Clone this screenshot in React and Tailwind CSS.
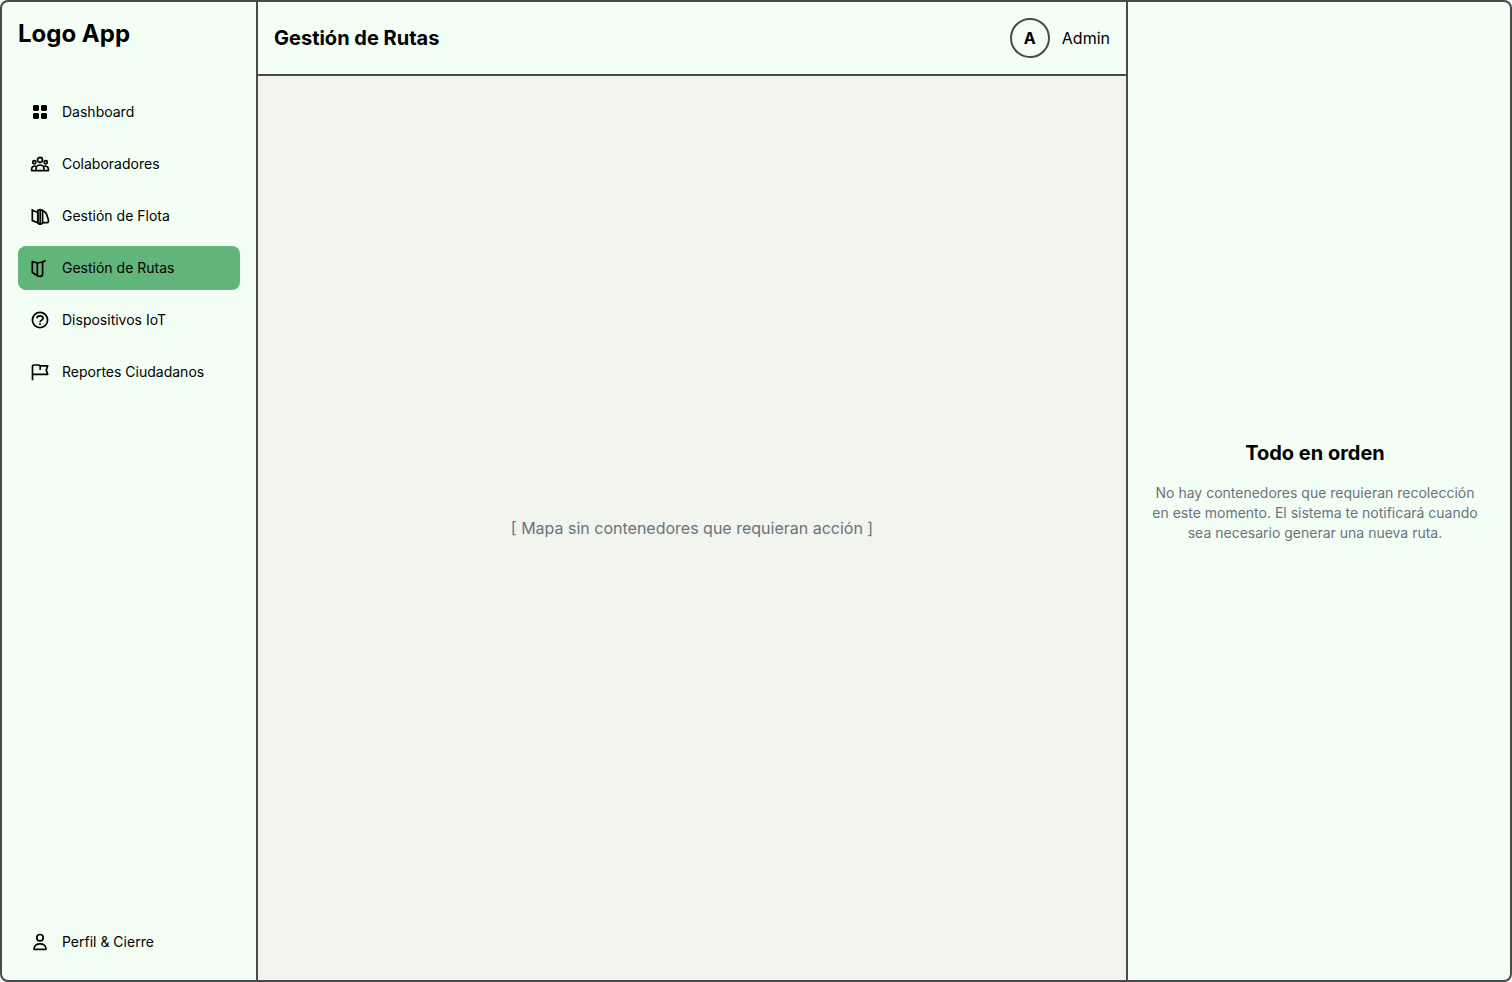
function Icon({ children }) {
  return (
    <svg
      viewBox="0 0 20 20"
      className="size-5 shrink-0"
      fill="none"
      stroke="currentColor"
      strokeWidth="1.7"
      strokeLinejoin="round"
      aria-hidden="true"
    >
      {children}
    </svg>
  );
}

function GridIcon() {
  return (
    <Icon>
      <g fill="currentColor" stroke="none">
        <rect x="3" y="3" width="6" height="6" rx="1.4" />
        <rect x="11" y="3" width="6" height="6" rx="1.4" />
        <rect x="3" y="11" width="6" height="6" rx="1.4" />
        <rect x="11" y="11" width="6" height="6" rx="1.4" />
      </g>
    </Icon>
  );
}

function TeamIcon() {
  return (
    <Icon>
      <circle cx="10" cy="5.8" r="2.5" />
      <circle cx="4.3" cy="8.2" r="1.6" />
      <circle cx="15.7" cy="8.2" r="1.6" />
      <path d="M6 16.6V15a4 4 0 0 1 8 0v1.6Z" />
      <path d="M6.2 12.5a3 3 0 0 0-4.600 2.500v1.600H6M13.800 12.500a3 3 0 0 1 4.600 2.500v1.600H14" />
    </Icon>
  );
}

function FleetIcon() {
  return (
    <Icon>
      <path d="M2.300 3v11.600l5.500 2.200V6.200L2.300 4.500" />
      <path d="M7.800 6.200V4.400L10 3.600l2.600.8v12.200c0 .8-1 1.500-2.200 1.500s-2.600-.6-2.600-1.500Z" />
      <path d="M10.200 4v14" />
      <path d="M12.600 4.800c2.600.6 4 2.600 4.600 5.400.3 1.500 1.300 2.800 1.300 4.800 0 1.200-.8 1.700-2 1.700h-3.900" />
    </Icon>
  );
}

function RouteIcon() {
  return (
    <Icon>
      <path d="M2.300 3.500v11L7.300 17.500V5L2.300 3.500Z" />
      <path d="M7.300 5 12.600 4v12c0 1.400-.9 2.300-2.200 2.300-1.200 0-3.100-.1-3.100-.8" />
      <path d="M12.400 4.100 15.700 2.500" />
    </Icon>
  );
}

function HelpIcon() {
  return (
    <Icon>
      <circle cx="10" cy="10" r="7.600" />
      <path d="M7 8.200C7 6.700 8.300 5.800 10 5.800c1.800 0 3.100.9 3.100 2.400 0 2-3.100 1.900-3.100 4" />
      <circle cx="10" cy="14" r="1" fill="currentColor" stroke="none" />
    </Icon>
  );
}

function FlagIcon() {
  return (
    <Icon>
      <path d="M2.500 18.200V4.200C2.500 3.400 3 3 4 3h4.500c1 0 1.200.9 2.200.9h7l-1.500 4.200 1.500 4.200H2.500M10.200 3.500v4.600" />
    </Icon>
  );
}

function UserIcon() {
  return (
    <Icon>
      <circle cx="10" cy="5.700" r="3.200" />
      <path d="M4.100 17.300v-.8c0-2.700 2.400-4.600 5.900-4.600s5.900 1.900 5.900 4.600v.8Z" />
    </Icon>
  );
}

const items = [
  { label: "Dashboard", icon: GridIcon },
  { label: "Colaboradores", icon: TeamIcon },
  { label: "Gestión de Flota", icon: FleetIcon },
  { label: "Gestión de Rutas", icon: RouteIcon, active: true },
  { label: "Dispositivos IoT", icon: HelpIcon },
  { label: "Reportes Ciudadanos", icon: FlagIcon },
];

function NavItem({ label, icon: Glyph, active }) {
  return (
    <a
      href="#"
      aria-current={active ? "page" : undefined}
      className={
        active
          ? "flex items-center gap-3 rounded-lg bg-[#62b57a] p-3 text-sm"
          : "flex items-center gap-3 rounded-lg p-3 text-sm"
      }
    >
      <Glyph />
      {label}
    </a>
  );
}

export default function App() {
  return (
    <div className="flex min-h-screen overflow-hidden rounded-lg border-2 border-[#4a4a4a] bg-[#f3fff4] font-['Inter',sans-serif] text-black">
      <aside className="flex w-64 shrink-0 flex-col border-r-2 border-[#4a4a4a] p-4">
        <div className="mb-10 text-2xl font-bold">Logo App</div>
        <nav className="flex flex-1 flex-col gap-2">
          {items.map((item) => (
            <NavItem key={item.label} {...item} />
          ))}
        </nav>
        <NavItem label="Perfil & Cierre" icon={UserIcon} />
      </aside>
      <main className="flex min-w-0 flex-1 flex-col">
        <header className="flex items-center justify-between border-b-2 border-[#4a4a4a] p-4">
          <h1 className="text-xl font-bold">Gestión de Rutas</h1>
          <div className="flex items-center gap-3">
            <div className="flex size-10 items-center justify-center rounded-full border-2 border-[#4a4a4a] font-bold">
              A
            </div>
            <span>Admin</span>
          </div>
        </header>
        <section className="flex flex-1 items-center justify-center bg-[#f2f4ee] text-[#6b7280]">
          <p>[ Mapa sin contenedores que requieran acción ]</p>
        </section>
      </main>
      <aside className="flex w-96 shrink-0 flex-col justify-center border-l-2 border-[#4a4a4a] pr-7 pl-5 text-center">
        <h2 className="mb-4 text-xl font-bold">Todo en orden</h2>
        <p className="text-sm text-[#6b7280]">
          No hay contenedores que requieran recolección en este momento. El
          sistema te notificará cuando sea necesario generar una nueva ruta.
        </p>
      </aside>
    </div>
  );
}
